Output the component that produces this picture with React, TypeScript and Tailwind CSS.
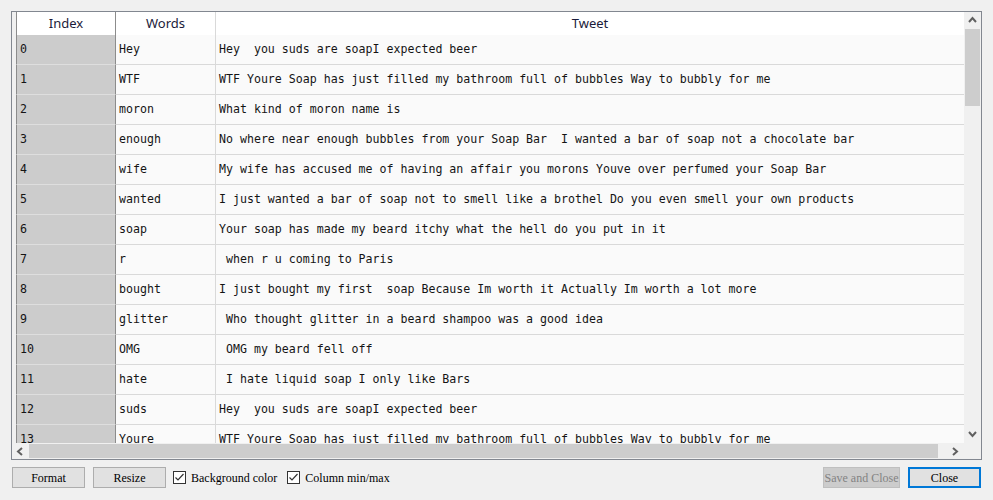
import React from "react";

const rows: [string, string][] = [
  ["Hey", "Hey  you suds are soapI expected beer"],
  ["WTF", "WTF Youre Soap has just filled my bathroom full of bubbles Way to bubbly for me"],
  ["moron", "What kind of moron name is"],
  ["enough", "No where near enough bubbles from your Soap Bar  I wanted a bar of soap not a chocolate bar"],
  ["wife", "My wife has accused me of having an affair you morons Youve over perfumed your Soap Bar"],
  ["wanted", "I just wanted a bar of soap not to smell like a brothel Do you even smell your own products"],
  ["soap", "Your soap has made my beard itchy what the hell do you put in it"],
  ["r", " when r u coming to Paris"],
  ["bought", "I just bought my first  soap Because Im worth it Actually Im worth a lot more"],
  ["glitter", " Who thought glitter in a beard shampoo was a good idea"],
  ["OMG", " OMG my beard fell off"],
  ["hate", " I hate liquid soap I only like Bars"],
  ["suds", "Hey  you suds are soapI expected beer"],
  ["Youre", "WTF Youre Soap has just filled my bathroom full of bubbles Way to bubbly for me"],
];

const Chevron = ({ dir }: { dir: "up" | "down" | "left" | "right" }) => {
  const pts = {
    up: "1,6 4.5,2 8,6",
    down: "1,2 4.5,6 8,2",
    left: "6,1 2,4.5 6,8",
    right: "2,1 6,4.5 2,8",
  }[dir];
  return (
    <svg width="9" height="9" viewBox="0 0 9 9">
      <polyline points={pts} fill="none" stroke="#606060" strokeWidth="2" />
    </svg>
  );
};

const Check = () => (
  <span className="w-[13px] h-[13px] border border-[#333333] bg-white flex items-center justify-center">
    <svg width="11" height="11" viewBox="0 0 11 11">
      <polyline points="1.5,5.5 4,8 9.5,2" fill="none" stroke="#333333" strokeWidth="1.2" />
    </svg>
  </span>
);

export default function App() {
  return (
    <div className="w-[993px] h-[500px] bg-[#f0f0f0] pt-[11px] px-[11px] overflow-hidden">
      <div className="w-[971px] h-[449px] border border-[#828790] flex flex-col">
        <div className="flex h-[431px]">
          <div className="w-[952px] h-[431px] overflow-hidden bg-[#f0f0f0] font-['DejaVu_Sans_Mono',monospace] text-[11.6px] text-[#141414]">
            <div className="flex h-[23px] font-['Noto_Sans',sans-serif] text-[13px] text-[#1b1b3a]">
              <div className="w-[4px]" />
              <div className="w-[100px] bg-white border-x border-[#8c8c8c] flex items-center justify-center pt-[1px]">Index</div>
              <div className="w-[100px] bg-white border-r border-[#d9d9d9] flex items-center justify-center">Words</div>
              <div className="flex-1 bg-white flex items-center justify-center">Tweet</div>
            </div>
            {rows.map(([w, t], i) => (
              <div key={i} className="flex h-[30px]">
                <div className="w-[4px]" />
                <div className="w-[100px] bg-[#cccccc] border-x border-x-[#8c8c8c] border-b border-b-[#dedede] flex items-center pl-[3px]">
                  {i}
                </div>
                <div className="w-[100px] bg-[#fafafa] border-r border-r-[#d9d9d9] border-b border-b-[#d9d9d9] flex items-center pl-[3px] whitespace-pre">
                  {w}
                </div>
                <div className="flex-1 bg-[#fafafa] border-b border-b-[#d9d9d9] flex items-center pl-[3px] whitespace-pre">
                  {t}
                </div>
              </div>
            ))}
          </div>
          <div className="w-[17px] flex flex-col bg-[#f0f0f0]">
            <div className="h-[17px] flex items-center justify-center">
              <Chevron dir="up" />
            </div>
            <div className="flex-1 px-[1px]">
              <div className="h-[77px] bg-[#cdcdcd]" />
            </div>
            <div className="h-[17px] flex items-center justify-center">
              <Chevron dir="down" />
            </div>
          </div>
        </div>
        <div className="flex h-[16px]">
          <div className="w-[952px] flex bg-[#f0f0f0]">
            <div className="w-[17px] flex items-center justify-center">
              <Chevron dir="left" />
            </div>
            <div className="flex-1 py-[1px]">
              <div className="w-[909px] h-full bg-[#cdcdcd]" />
            </div>
            <div className="w-[17px] flex items-center justify-center">
              <Chevron dir="right" />
            </div>
          </div>
          <div className="w-[17px] bg-[#f0f0f0]" />
        </div>
      </div>
      <div className="mt-[7px] mx-[1px] flex items-center font-['Liberation_Serif',serif] text-[12px] text-black">
        <button className="w-[73px] h-[21px] bg-[#e1e1e1] border border-[#adadad]">Format</button>
        <button className="ml-[8px] w-[73px] h-[21px] bg-[#e1e1e1] border border-[#adadad]">Resize</button>
        <label className="ml-[7px] flex items-center gap-[5px]">
          <Check />
          <span>Background color</span>
        </label>
        <label className="ml-[10px] flex items-center gap-[5px]">
          <Check />
          <span>Column min/max</span>
        </label>
        <div className="flex-1" />
        <button className="w-[77px] h-[21px] bg-[#cccccc] border border-[#bfbfbf] text-[#838383]">Save and Close</button>
        <button className="ml-[8px] w-[73px] h-[21px] bg-[#e1e1e1] border-2 border-[#0078d7]">Close</button>
      </div>
    </div>
  );
}
